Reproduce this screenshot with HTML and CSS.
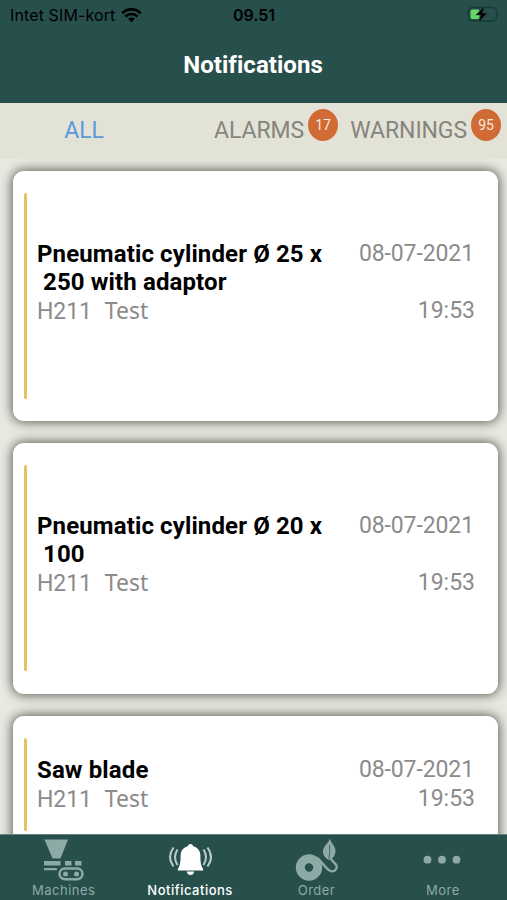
FILE: index.html
```html
<!DOCTYPE html>
<html lang="en">
<head>
<meta charset="utf-8">
<title>Notifications</title>
<link rel="stylesheet" href="styles.css">
</head>
<body>
<div class="app">
  <header class="header">
    <div class="status">
      <div class="carrier"><span>Intet SIM-kort</span>
        <svg width="21" height="15" viewBox="0 0 21 15"><path d="M1.2 5.3a13.2 13.2 0 0 1 18.6 0M4.400 8.500a8.700 8.700 0 0 1 12.200 0" fill="none" stroke="#000" stroke-width="2.700"/><path d="M10.500 14.200 7.100 10.800a4.800 4.800 0 0 1 6.800 0z"/></svg>
      </div>
      <div class="clock">09.51</div>
      <svg class="battery" width="34" height="18" viewBox="0 0 34 18"><rect x="2.500" y="1.500" width="28" height="13.500" rx="4" fill="none" stroke="#173a38" stroke-width="1.300"/><path d="M32 6q2 2.200 0 4.500z" fill="#173a38"/><rect x="4.500" y="3.500" width="9" height="9.500" rx="2" fill="#65d665"/><path d="M18.500.3 9.800 9.100h5l-2.200 6.900 8.800-8.900h-5z" stroke="#274f4b" stroke-width=".5"/></svg>
    </div>
    <h1 class="title">Notifications</h1>
  </header>
  <nav class="tabs">
    <div class="tab active">ALL</div>
    <div class="tab">ALARMS<span class="badge">17</span></div>
    <div class="tab">WARNINGS<span class="badge">95</span></div>
  </nav>
  <main class="list">
    <article class="card">
      <div class="info"><h2>Pneumatic cylinder Ø 25 x<br>&nbsp;250 with adaptor</h2><p>H211<span class="test">Test</span></p></div>
      <div class="when"><span class="date">08-07-2021</span><span>19:53</span></div>
    </article>
    <article class="card">
      <div class="info"><h2>Pneumatic cylinder Ø 20 x<br>&nbsp;100</h2><p>H211<span class="test">Test</span></p></div>
      <div class="when"><span class="date">08-07-2021</span><span>19:53</span></div>
    </article>
    <article class="card short">
      <div class="info"><h2>Saw blade</h2><p>H211<span class="test">Test</span></p></div>
      <div class="when"><span class="date">08-07-2021</span><span>19:53</span></div>
    </article>
  </main>
  <nav class="bottom">
    <div class="item">
      <svg width="44" height="46" viewBox="0 0 44 46"><g fill="#8eaaa6"><path d="M3.500 4.500H27l-7.500 19h-8z"/><path d="M3 26h16.500v4.500H3zM24 26h6.500v4.500H24zM34 26h6.500v4.500H34zM3 33h13v2.200H3z"/></g><rect x="18.500" y="33.500" width="23" height="10.700" rx="5.350" fill="none" stroke="#8eaaa6" stroke-width="2.500"/><circle cx="24.500" cy="38.900" r="2.500" fill="#8eaaa6"/><circle cx="35.500" cy="38.900" r="2.500" fill="#8eaaa6"/></svg>
      <span>Machines</span>
    </div>
    <div class="item on">
      <svg width="44" height="46" viewBox="0 0 44 46"><path d="M22.500 9c1.700 0 2.600 1 2.600 2.300 4.600 1.200 7.300 4.700 7.300 9.200 0 6.500.5 10.300 2.700 13.300v1.700H9.900v-1.700c2.200-3 2.700-6.800 2.700-13.300 0-4.500 2.700-8 7.300-9.200 0-1.300.9-2.300 2.600-2.300zM18.800 36.500h7.400q-.7 3.500-3.700 3.500t-3.700-3.500z" fill="#fff"/><path d="M9.500 14.500q-5 7.500 0 15.500M5.500 12.500q-7 9.500 0 19M35.500 14.500q5 7.500 0 15.500M39.500 12.500q7 9.500 0 19" fill="none" stroke="#b7cac6" stroke-width="2.100"/></svg>
      <span>Notifications</span>
    </div>
    <div class="item">
      <svg width="44" height="46" viewBox="0 0 44 46"><circle cx="15" cy="32.500" r="8.700" fill="none" stroke="#8eaaa6" stroke-width="9"/><path d="M22.500 22.500c5 3 8 10 13 13 4 2 8-.5 7-5-1-3-6-5-7-9" fill="none" stroke="#8eaaa6" stroke-width="2.400"/><path d="M36 3.500c1 5 6 8 5.500 13-.3 4-3 7.500-6.500 8.500-4-2-6.300-5-6-9 .3-5.500 5.500-7.500 7-12.500z" fill="#8eaaa6"/><path d="M35.500 10q1 7-.5 14" fill="none" stroke="#3b605b" stroke-width=".9"/></svg>
      <span>Order</span>
    </div>
    <div class="item">
      <svg width="44" height="46" viewBox="0 0 44 46"><g fill="#8eaaa6"><circle cx="7.500" cy="24.700" r="3.900"/><circle cx="22" cy="24.700" r="3.900"/><circle cx="36.500" cy="24.700" r="3.900"/></g></svg>
      <span>More</span>
    </div>
  </nav>
</div>
</body>
</html>
```

FILE: styles.css
```css
* { box-sizing: border-box; }
body { margin: 0; }
h1, h2, p { margin: 0; }
.app { width: 507px; height: 900px; overflow: hidden; display: flex; flex-direction: column; font-family: Roboto, sans-serif; background: #e9eae3; }
.header { height: 103px; flex: none; background: #274f4b; }
.status { height: 30px; display: grid; grid-template-columns: 1fr auto 1fr; align-items: center; padding: 0 9px 0 10px; font: 16px/30px Inter, sans-serif; color: #000; }
.carrier { display: flex; align-items: center; gap: 6px; letter-spacing: .12px; }
.clock { font-weight: 600; letter-spacing: 0; }
.battery { justify-self: end; margin-right: -2px; }
.title { margin-top: 20px; padding-right: 1px; text-align: center; font-size: 24px; line-height: 30px; font-weight: 700; letter-spacing: .04px; color: #fff; }
.tabs { height: 56px; flex: none; display: grid; grid-template-columns: 168px 170px 163px; background: #e3e2d6; color: #85857e; font-size: 23px; line-height: 56px; }
.tab { display: flex; justify-content: flex-end; gap: 4px; letter-spacing: -.1px; }
.tab.active { justify-content: center; color: #5b98d8; }
.badge { width: 30px; height: 32px; margin-top: 6px; border-radius: 50%; background: #d06b35; color: #f8e9df; font-size: 14px; line-height: 32px; text-align: center; letter-spacing: 0; }
.list { flex: 1; min-height: 0; overflow: hidden; display: flex; flex-direction: column; gap: 22px; padding: 12px 9px 0 13px; }
.card { height: 250.300px; flex: none; display: flex; justify-content: space-between; align-items: center; padding: 0 23px 0 11px; border-radius: 11px; background: #fff; box-shadow: 0 0 12px 1px #555850; }
.card::before { content: ""; width: 3px; height: 206px; flex: none; border-radius: 2px; background: #e3c45d; }
.info { flex: 1; padding: 0 0 26px 10px; }
.info h2 { font-size: 24px; line-height: 28px; font-weight: 700; letter-spacing: .12px; color: #000; white-space: nowrap; }
.info p, .when { font-size: 23px; line-height: 29px; color: #8b8b8b; }
.info p { letter-spacing: -.1px; }
.test { margin-left: 13px; font-family: "Noto Sans", sans-serif; font-size: 23px; line-height: 28px; letter-spacing: 0; }
.when { align-self: stretch; display: flex; flex-direction: column; align-items: flex-end; padding-top: 68px; }
.date { margin: 0 1px 28px 0; letter-spacing: -.1px; }
.short { align-items: flex-start; }
.short::before { height: 93px; margin-top: 22px; }
.short .info { padding-top: 40px; }
.short .when { padding-top: 39px; }
.short .date { margin-bottom: 0; }
.bottom { height: 66px; flex: none; display: grid; grid-template-columns: repeat(4, 126.400px); background: #274f4b; border-top: 1px solid #69827e; }
.item { display: flex; flex-direction: column; align-items: center; color: #8eaaa6; font: 400 13px/18px Inter, sans-serif; letter-spacing: .5px; }
.item svg { flex: none; }
.item span { padding-left: 1px; }
.item.on { color: #fff; font-weight: 500; }
```
